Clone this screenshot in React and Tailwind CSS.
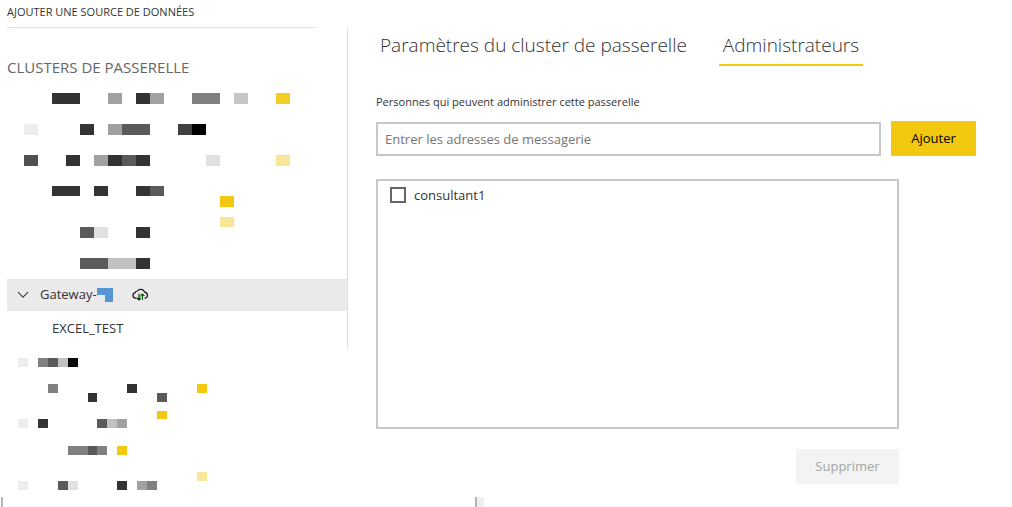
import { useState } from "react";

// [x, y, width, height, color]
const UPPER_BLOCKS = [
  [52, 0, 28, 11, "#333333"],
  [108, 0, 14, 11, "#a1a1a1"],
  [136, 0, 14, 11, "#333333"],
  [150, 0, 14, 11, "#a1a1a1"],
  [192, 0, 28, 11, "#808080"],
  [234, 0, 14, 11, "#c6c6c6"],
  [276, 0, 14, 11, "#f2cd24"],
  [24, 31, 14, 11, "#ededed"],
  [80, 31, 14, 11, "#333333"],
  [108, 31, 14, 11, "#a1a1a1"],
  [122, 31, 28, 11, "#5a5a5a"],
  [178, 31, 14, 11, "#404040"],
  [192, 31, 14, 11, "#000000"],
  [24, 62, 14, 11, "#505050"],
  [66, 62, 14, 11, "#333333"],
  [94, 62, 14, 11, "#a1a1a1"],
  [108, 62, 14, 11, "#333333"],
  [122, 62, 14, 11, "#5a5a5a"],
  [136, 62, 14, 11, "#333333"],
  [206, 62, 14, 11, "#e1e1e1"],
  [276, 62, 14, 11, "#f8e798"],
  [52, 93, 28, 10, "#333333"],
  [94, 93, 14, 10, "#333333"],
  [136, 93, 14, 10, "#333333"],
  [150, 93, 14, 10, "#5a5a5a"],
  [220, 103, 14, 11, "#f2c811"],
  [220, 124, 14, 10, "#f8e798"],
  [80, 134, 14, 11, "#5a5a5a"],
  [94, 134, 14, 11, "#e1e1e1"],
  [136, 134, 14, 11, "#333333"],
  [80, 165, 28, 11, "#5a5a5a"],
  [108, 165, 28, 11, "#c1c1c1"],
  [136, 165, 14, 11, "#333333"],
];

const LOWER_BLOCKS = [
  [18, 0, 10, 9, "#ededed"],
  [38, 0, 10, 9, "#808080"],
  [48, 0, 10, 9, "#5a5a5a"],
  [58, 0, 10, 9, "#c1c1c1"],
  [68, 0, 10, 9, "#0a0a0a"],
  [48, 26, 10, 9, "#808080"],
  [127, 26, 10, 9, "#333333"],
  [197, 26, 10, 9, "#f2c811"],
  [88, 35, 9, 9, "#333333"],
  [157, 35, 10, 9, "#5a5a5a"],
  [157, 53, 10, 8, "#f2c811"],
  [18, 61, 10, 9, "#ededed"],
  [38, 61, 10, 9, "#333333"],
  [97, 61, 10, 9, "#5a5a5a"],
  [107, 61, 10, 9, "#c1c1c1"],
  [117, 61, 10, 9, "#a1a1a1"],
  [68, 88, 20, 9, "#808080"],
  [88, 88, 9, 9, "#5a5a5a"],
  [97, 88, 10, 9, "#808080"],
  [117, 88, 10, 9, "#f2c811"],
  [197, 114, 10, 9, "#f8e798"],
  [18, 123, 10, 9, "#ededed"],
  [58, 123, 10, 9, "#5a5a5a"],
  [68, 123, 10, 9, "#e1e1e1"],
  [117, 123, 10, 9, "#333333"],
  [137, 123, 10, 9, "#a1a1a1"],
  [147, 123, 10, 9, "#808080"],
];

function Redacted({ blocks, width, height }) {
  return (
    <svg
      className="block"
      width={width}
      height={height}
      shapeRendering="crispEdges"
      aria-hidden="true"
    >
      {blocks.map(([x, y, w, h, fill]) => (
        <rect key={`${x}-${y}`} x={x} y={y} width={w} height={h} fill={fill} />
      ))}
    </svg>
  );
}

function CloudSyncIcon() {
  return (
    <svg width="17" height="14" viewBox="0 0 17 14" fill="none" aria-hidden="true">
      <path
        d="M4.6 10.2H3.6a2.8 2.8 0 0 1-.5-5.5A2.7 2.7 0 0 1 5.5 3 4 4 0 0 1 12.6 4.2 3.1 3.1 0 0 1 13.4 10.2H12.6"
        stroke="#111"
        strokeWidth="1.2"
      />
      <path d="M7 5.8V12M5 10l2 2 2-2" stroke="#111" strokeWidth="1.1" />
      <path d="M10.4 12V6M8.4 8l2-2 2 2" stroke="#1c4a1c" strokeWidth="1.1" />
      <path d="M8.5 6.5v5" stroke="#4fd04f" />
    </svg>
  );
}

function Sidebar() {
  const [expanded, setExpanded] = useState(true);

  return (
    <aside className="w-[348px] shrink-0">
      <div className="ml-[7px] mr-[33px] border-b border-[#dfdfdf] pt-1 pb-[7px]">
        <a href="#add" className="block text-[11px] leading-4">
          AJOUTER UNE SOURCE DE DONNÉES
        </a>
      </div>

      <div className="border-r border-[#dfdfdf] pt-7">
        <h2 className="pl-[7px] text-[15px] leading-[22px] text-[#666]">
          CLUSTERS DE PASSERELLE
        </h2>
        <div className="pt-[15px] pb-[10px]">
          <Redacted blocks={UPPER_BLOCKS} width={300} height={176} />
        </div>
        <button
          type="button"
          aria-expanded={expanded}
          onClick={() => setExpanded(!expanded)}
          className="ml-[7px] flex h-8 w-[340px] items-center bg-[#eaeaea] pl-[10px] text-[13px]"
        >
          <svg width="12" height="8" viewBox="0 0 12 8" fill="none" aria-hidden="true">
            <path d="M1 1.2l5 5 5-5" stroke="#444" strokeWidth="1.2" />
          </svg>
          <span className="ml-[11px]">Gateway-</span>
          <svg width="16" height="14" aria-hidden="true">
            <path d="M0 0h16v14H8V7H0z" fill="#5796d2" />
          </svg>
          <span className="ml-[19px]">
            <CloudSyncIcon />
          </span>
        </button>
        <div className="h-[38px] pt-[7px] pl-[52px]">
          {expanded && (
            <a href="#excel" className="block text-[13px] leading-5">
              EXCEL_TEST
            </a>
          )}
        </div>
      </div>

      <div className="pt-[9px]">
        <Redacted blocks={LOWER_BLOCKS} width={300} height={132} />
      </div>
    </aside>
  );
}

function Tab({ active, onClick, children }) {
  return (
    <button
      type="button"
      role="tab"
      aria-selected={active}
      onClick={onClick}
      className={`border-b-2 px-1 pb-[5px] text-[19px] leading-7 font-light ${
        active ? "border-[#f2c811]" : "border-transparent"
      }`}
    >
      {children}
    </button>
  );
}

export default function App() {
  const [tab, setTab] = useState("admins");
  const [email, setEmail] = useState("");

  return (
    <div className="bg-white font-['Open_Sans','Noto_Sans',sans-serif] text-[#333]">
      <div className="flex">
        <Sidebar />

        <main className="min-w-0 flex-1 pt-[31px] pr-9 pl-7">
          <div role="tablist" className="flex gap-7">
            <Tab active={tab === "settings"} onClick={() => setTab("settings")}>
              Paramètres du cluster de passerelle
            </Tab>
            <Tab active={tab === "admins"} onClick={() => setTab("admins")}>
              Administrateurs
            </Tab>
          </div>

          <form onSubmit={(e) => e.preventDefault()}>
            <label
              htmlFor="email"
              className="mt-7 block text-[11px] leading-4"
            >
              Personnes qui peuvent administrer cette passerelle
            </label>
            <div className="mt-[11px] flex items-end gap-[10px]">
              <input
                id="email"
                type="text"
                value={email}
                onChange={(e) => setEmail(e.target.value)}
                placeholder="Entrer les adresses de messagerie"
                className="h-[34px] min-w-0 flex-1 border-2 border-[#c8c8c8] px-[7px] text-[13px] outline-none placeholder:text-[#767676]"
              />
              <button
                type="submit"
                className="h-[35px] w-[85px] bg-[#f2c811] text-[13px] text-black"
              >
                Ajouter
              </button>
            </div>
          </form>

          <div className="mr-[77px]">
            <div className="mt-[23px] h-[250px] border-2 border-[#c8c8c8] px-3 py-1">
              <label className="flex items-center gap-2 text-[13px] leading-5">
                <input
                  type="checkbox"
                  className="size-4 appearance-none border-2 border-[#666] checked:bg-[#f2c811]"
                />
                consultant1
              </label>
            </div>
            <div className="mt-5 flex justify-end">
              <button
                type="button"
                disabled
                className="h-[35px] w-[103px] bg-[#f3f3f3] text-[13px] text-[#a6a6a6]"
              >
                Supprimer
              </button>
            </div>
          </div>
        </main>
      </div>

      <footer className="mt-[7px] flex h-[10px]">
        <div className="ml-px w-[476px] border-x-2 border-[#b4b4bb]" />
        <div className="w-[7px] bg-[#f0eeee]" />
      </footer>
    </div>
  );
}
